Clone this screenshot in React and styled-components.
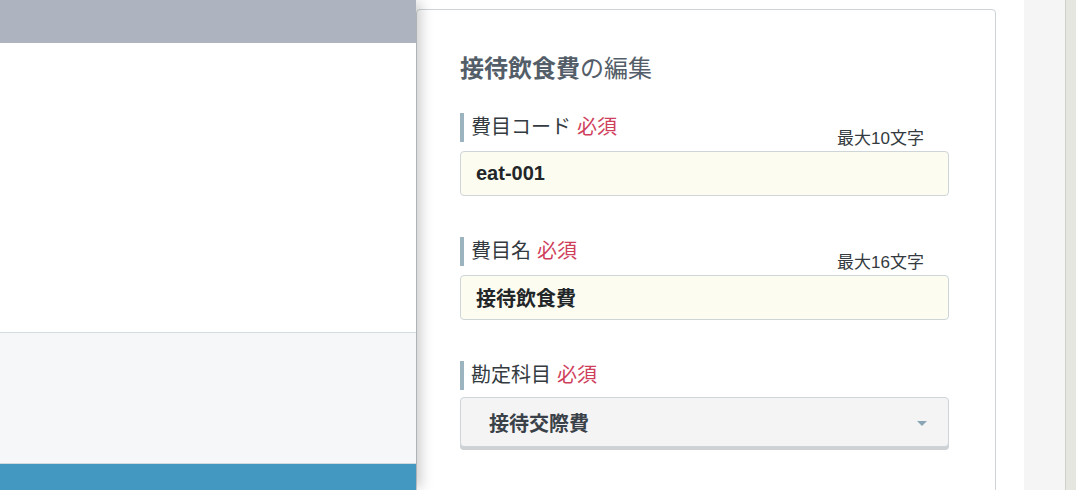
import styled, { createGlobalStyle } from "styled-components";

const GlobalStyle = createGlobalStyle`
  html, body, #root {
    height: 100%;
    margin: 0;
  }

  body {
    font-family: "Liberation Sans", "Noto Sans CJK JP", sans-serif;
    color: #333a40;
    background: #ffffff;
    overflow: hidden;
  }
`;

const Page = styled.div`
  display: flex;
  height: 100%;
  overflow: hidden;
`;

const Drawer = styled.aside`
  position: relative;
  z-index: 2;
  width: 416px;
  flex-shrink: 0;
  display: flex;
  flex-direction: column;
  background: #ffffff;
  box-shadow: 7px 0 12px -2px rgba(0, 0, 0, 0.2);
`;

const DrawerHeader = styled.div`
  height: 43px;
  background: #adb3bf;
`;

const DrawerBody = styled.div`
  height: 289px;
  background: #ffffff;
`;

const DrawerFooter = styled.div`
  height: 130px;
  border-top: 1px solid #d3dcdf;
  background: #f5f7f9;
`;

const DrawerBar = styled.div`
  flex: 1;
  border-top: 1px solid #d0dadf;
  background: #4298c0;
`;

const Main = styled.main`
  flex: 1;
  display: flex;
  align-items: flex-start;
  padding: 9px 28px 0 0;
  background: #ffffff;
  overflow: hidden;
`;

const Card = styled.section`
  flex: 1;
  min-height: 500px;
  padding: 43px 46px 0 43px;
  border: 1px solid #cdd4d7;
  border-radius: 4px;
  background: #ffffff;
`;

const Title = styled.h2`
  margin: 0 0 28px;
  font-size: 24px;
  line-height: 32px;
  font-weight: 400;
  color: #545e69;

  strong {
    font-weight: 700;
  }
`;

const Form = styled.div`
  display: flex;
  flex-direction: column;
  gap: 41px;
`;

const Field = styled.div`
  display: flex;
  flex-direction: column;
`;

const FieldHead = styled.div`
  display: flex;
  justify-content: space-between;
  height: ${({ $hint }) => ($hint ? "38px" : "29px")};
  margin-bottom: ${({ $hint }) => ($hint ? "0" : "7px")};
`;

const Label = styled.label`
  align-self: flex-start;
  height: 29px;
  padding-left: 7px;
  border-left: 4px solid #9cb4c0;
  font-size: 20px;
  line-height: 29px;
  color: #333a40;
`;

const Required = styled.span`
  margin-left: 6px;
  color: #cf3f5c;
`;

const Hint = styled.span`
  align-self: flex-end;
  margin-right: 25px;
  padding-bottom: 2px;
  font-size: 17px;
  line-height: 20px;
  color: #333a40;
`;

const TextInput = styled.div`
  height: 45px;
  box-sizing: border-box;
  display: flex;
  align-items: center;
  padding: 0 15px;
  border: 1px solid #cdd5d9;
  border-radius: 4px;
  background: #fcfdf0;
  font-size: 20px;
  font-weight: 700;
  color: #222629;
`;

const Select = styled.div`
  height: 50px;
  box-sizing: border-box;
  display: flex;
  align-items: center;
  justify-content: space-between;
  padding: 0 21px 0 28px;
  border: 1px solid #cdd5d9;
  border-radius: 4px;
  background: #f4f4f4;
  box-shadow: 0 3px 0 #cdd1d3;
  font-size: 20px;
  font-weight: 700;
  color: #3a4148;
`;

const Caret = styled.span`
  width: 0;
  height: 0;
  margin-top: 2px;
  border-left: 5px solid transparent;
  border-right: 5px solid transparent;
  border-top: 5px solid #8aa6b6;
`;

const Side = styled.div`
  width: 52px;
  flex-shrink: 0;
  display: flex;
`;

const Rail = styled.div`
  width: 41px;
  background: #f5f5f5;
`;

const Scroll = styled.div`
  flex: 1;
  border-left: 1px solid #d0d0cb;
  background: #e6e6e0;
`;

const fields = [
  { label: "費目コード", hint: "最大10文字", value: "eat-001" },
  { label: "費目名", hint: "最大16文字", value: "接待飲食費" },
];

function App() {
  return (
    <>
      <GlobalStyle />
      <Page>
        <Drawer>
          <DrawerHeader />
          <DrawerBody />
          <DrawerFooter />
          <DrawerBar />
        </Drawer>

        <Main>
          <Card>
            <Title>
              <strong>接待飲食費</strong>の編集
            </Title>

            <Form>
              {fields.map((f) => (
                <Field key={f.label}>
                  <FieldHead $hint>
                    <Label>
                      {f.label}
                      <Required>必須</Required>
                    </Label>
                    <Hint>{f.hint}</Hint>
                  </FieldHead>
                  <TextInput>{f.value}</TextInput>
                </Field>
              ))}

              <Field>
                <FieldHead>
                  <Label>
                    勘定科目
                    <Required>必須</Required>
                  </Label>
                </FieldHead>
                <Select>
                  接待交際費
                  <Caret />
                </Select>
              </Field>
            </Form>
          </Card>
        </Main>

        <Side>
          <Rail />
          <Scroll />
        </Side>
      </Page>
    </>
  );
}

export default App;
